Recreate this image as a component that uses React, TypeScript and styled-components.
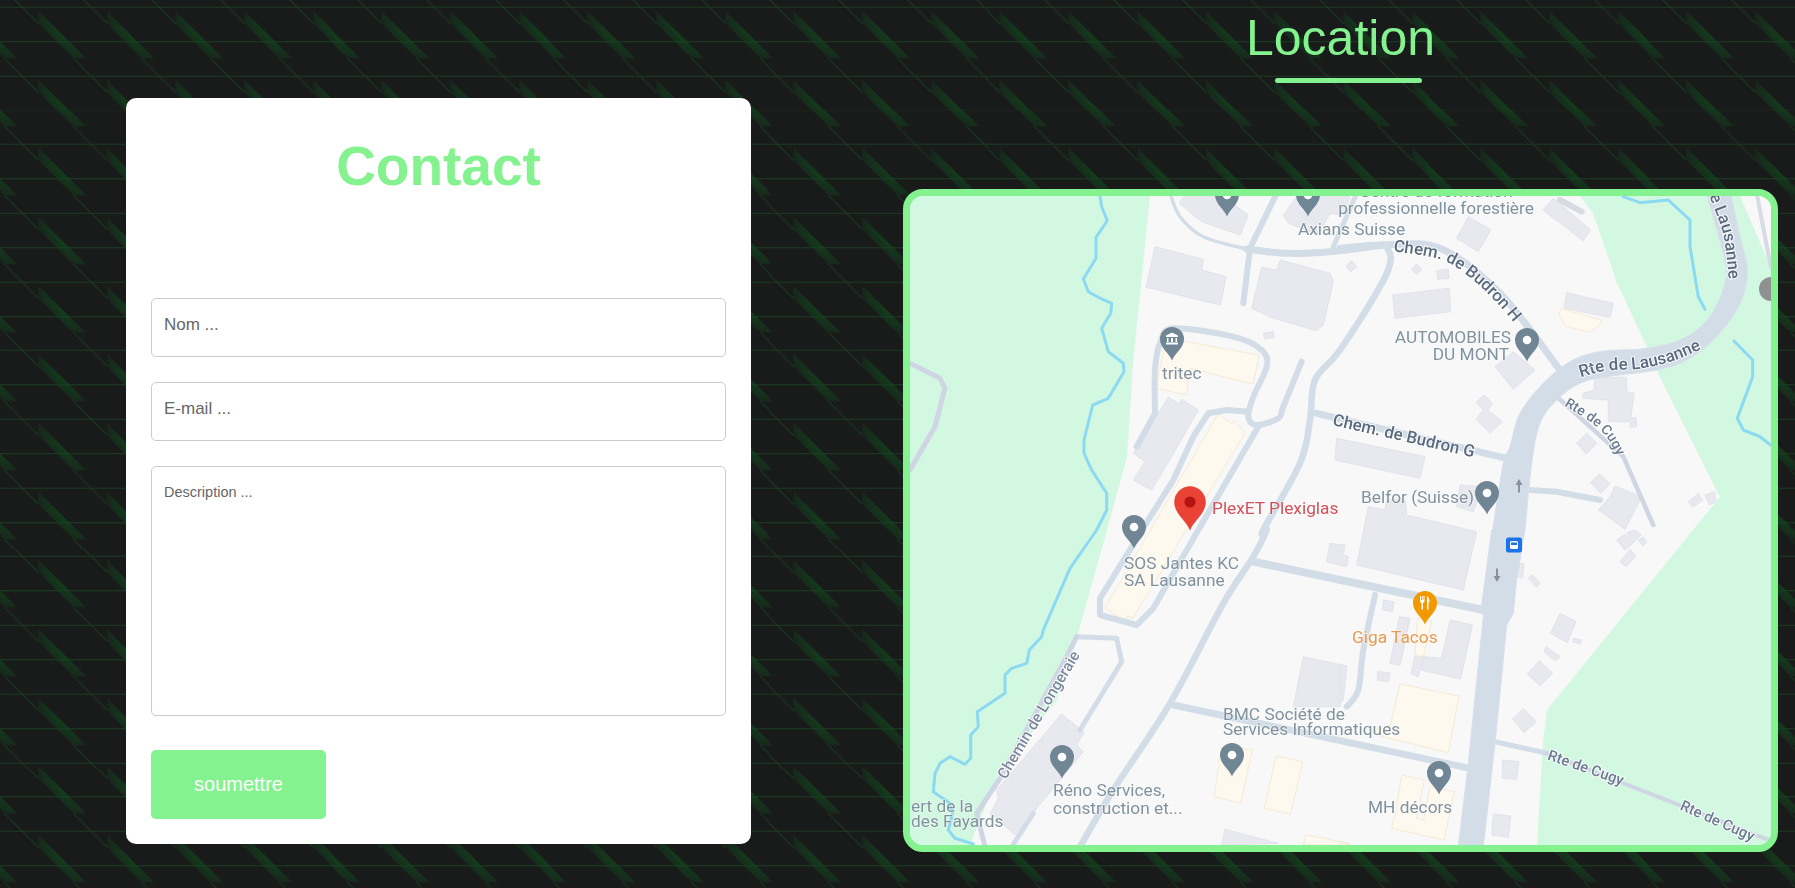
import React from "react";
import styled, { createGlobalStyle } from "styled-components";

const T = 68.7;
const tileShape = `<path d="M38.3 11 L86 58 L73 58 L38.3 23.3Z" fill="url(#g)"/><path d="M4.3 -10.7 L38.3 23.3" stroke="#163a1e" stroke-width="1" fill="none"/>`;
const copies = [-T, 0, T]
  .flatMap((dx) => [-T, 0, T].map((dy) => `<g transform="translate(${dx} ${dy})">${tileShape}</g>`))
  .join("");
const tile = `<svg xmlns="http://www.w3.org/2000/svg" width="${T}" height="${T}" viewBox="0 0 ${T} ${T}"><defs><radialGradient id="g" gradientUnits="userSpaceOnUse" cx="0" cy="0" r="1" gradientTransform="translate(63 36) rotate(45) scale(48 15)"><stop offset="0" stop-color="#133c1b"/><stop offset="0.55" stop-color="#162d1c"/><stop offset="1" stop-color="#191b1b"/></radialGradient></defs>${copies}<path d="M0 7.3H${T}" stroke="#183a1f" stroke-width="1"/><path d="M0 41.6H${T}" stroke="#193f21" stroke-width="1"/></svg>`;

const GlobalStyle = createGlobalStyle`
  html, body { margin: 0; padding: 0; }
  body {
    background-color: #191b1b;
    background-image: url("data:image/svg+xml,${encodeURIComponent(tile)}");
    background-size: ${T}px ${T}px;
    font-family: "Liberation Sans", Arial, sans-serif;
  }
`;

const accent = "#83f28f";

const Page = styled.main`
  display: flex;
  align-items: flex-start;
  height: 888px;
  overflow: hidden;
`;
const ContactCard = styled.section`
  box-sizing: border-box;
  width: 625px;
  margin: 98px 0 0 126px;
  padding: 25px;
  background: #fff;
  border-radius: 10px;
`;
const ContactTitle = styled.h2`
  margin: 12px 0 101px;
  font-size: 55px;
  line-height: 62px;
  font-weight: 700;
  text-align: center;
  color: ${accent};
`;
const Form = styled.form`
  display: flex;
  flex-direction: column;
  align-items: flex-start;
`;
const TextInput = styled.input`
  box-sizing: border-box;
  width: 100%;
  height: 59px;
  margin-bottom: 25px;
  padding: 0 12px 5px;
  border: 1px solid #ccc;
  border-radius: 5px;
  font: 17px "Liberation Sans", Arial, sans-serif;
  background: #fff;
  &::placeholder {
    color: #666;
  }
`;
const TextArea = styled.textarea`
  box-sizing: border-box;
  width: 100%;
  height: 250px;
  margin-bottom: 34px;
  padding: 17px 12px;
  border: 1px solid #ccc;
  border-radius: 5px;
  font: 14.5px "Liberation Sans", Arial, sans-serif;
  resize: none;
  background: #fff;
  &::placeholder {
    color: #666;
  }
`;
const SubmitButton = styled.button`
  width: 175px;
  height: 69px;
  border: 0;
  border-radius: 5px;
  background: ${accent};
  color: #fff;
  font: 20px "Liberation Sans", Arial, sans-serif;
`;
const LocationColumn = styled.section`
  width: 875px;
  margin-left: 152px;
`;
const LocationTitle = styled.h2`
  margin: 9px 0 0;
  font-size: 50px;
  line-height: 58px;
  font-weight: 400;
  text-align: center;
  color: ${accent};
`;
const TitleBar = styled.div`
  width: 147px;
  height: 5px;
  margin: 11px 0 0 372px;
  border-radius: 3px;
  background: ${accent};
`;
const MapFrame = styled.div`
  box-sizing: border-box;
  height: 663px;
  margin-top: 106px;
  border: 7px solid ${accent};
  border-radius: 20px;
  overflow: hidden;
  background: #f8f8f8;
`;
const MapSvg = styled.svg`
  display: block;
  width: 861px;
  height: 649px;
  filter: blur(0.45px);
`;
const PlaceLabel = styled.text<{ $color?: string; $size?: number }>`
  font-family: Roboto, sans-serif;
  font-size: ${(p) => p.$size ?? 17.3}px;
  fill: ${(p) => p.$color ?? "#7f929e"};
  paint-order: stroke;
  stroke: rgba(255, 255, 255, 0.55);
  stroke-width: 1.5px;
`;
const RoadLabel = styled.text<{ $color?: string; $size?: number }>`
  font-family: Roboto, sans-serif;
  font-size: ${(p) => p.$size ?? 16.8}px;
  font-weight: 500;
  fill: ${(p) => p.$color ?? "#5a6a7e"};
  paint-order: stroke;
  stroke: #fff;
  stroke-opacity: 0.85;
  stroke-width: 2px;
`;

type P = number[];
const z = (ox: number, oy: number, pts: P) => {
  const out: number[] = [];
  for (let i = 0; i < pts.length; i += 2) out.push(ox + pts[i] / 3, oy + pts[i + 1] / 3);
  return out;
};
const Z2 = (p: P) => z(900, 180, p);
const Z3 = (p: P) => z(1340, 180, p);
const Z4 = (p: P) => z(900, 530, p);
const Z5 = (p: P) => z(1340, 530, p);
const Z10 = (p: P) => z(1130, 400, p);
const Z12 = (p: P) => z(1130, 180, p);

const line = (p: P) => {
  let d = `M${p[0].toFixed(1)} ${p[1].toFixed(1)}`;
  for (let i = 2; i < p.length; i += 2) d += `L${p[i].toFixed(1)} ${p[i + 1].toFixed(1)}`;
  return d;
};
// Catmull-Rom spline through the points, continuing an already started path when `cont` is set.
const spline = (p: P, cont = false) => {
  let d = `${cont ? "L" : "M"}${p[0].toFixed(1)} ${p[1].toFixed(1)}`;
  const at = (i: number) => Math.max(0, Math.min(p.length - 2, i));
  for (let i = 0; i < p.length - 2; i += 2) {
    const a = at(i - 2), b = i, c = i + 2, e = at(i + 4);
    const c1x = p[b] + (p[c] - p[a]) / 6;
    const c1y = p[b + 1] + (p[c + 1] - p[a + 1]) / 6;
    const c2x = p[c] - (p[e] - p[b]) / 6;
    const c2y = p[c + 1] - (p[e + 1] - p[b + 1]) / 6;
    d += `C${c1x.toFixed(1)} ${c1y.toFixed(1)} ${c2x.toFixed(1)} ${c2y.toFixed(1)} ${p[c].toFixed(1)} ${p[c + 1].toFixed(1)}`;
  }
  return d;
};
const poly = (p: P) => line(p) + "Z";

const greens: P[] = [
  [1150, 196, 1133, 363, 1127, 457, 1107, 530, 1077, 637, 1057, 700, 997, 777, 970, 845, 910, 845, 910, 196],
  [1580, 196, 1740, 196, 1771, 268, 1771, 845, 1537, 845, 1543, 743, 1547, 710, 1693, 530, 1720, 497, 1660, 377, 1647, 347, 1617, 283, 1593, 213],
];

const rivers: P[] = [
  [
    ...Z2([600, 50, 605, 80, 622, 122, 588, 172, 588, 235, 550, 297, 565, 335, 605, 357, 635, 370, 632, 400, 605, 445, 625, 515, 670, 550, 672, 575, 625, 655, 578, 675, 552, 780, 552, 820, 575, 870, 620, 940, 620, 990, 590, 1050]),
    ...Z4([510, 115, 430, 300, 425, 320, 388, 360, 380, 400, 335, 415, 315, 435, 315, 490, 232, 545, 235, 590, 212, 615, 212, 685, 195, 703, 150, 680, 120, 700, 105, 730, 100, 785, 150, 820, 158, 850, 145, 900, 165, 925, 220, 942]),
  ],
  Z3([850, 50, 900, 68, 985, 60, 1050, 120, 1050, 200, 1075, 350, 1095, 388]),
  Z3([1182, 483, 1238, 540, 1238, 590, 1192, 715, 1210, 750, 1260, 770, 1292, 795]),
];

const buildings: P[] = [
  Z2([765, 200, 910, 238, 905, 270, 978, 290, 962, 375, 738, 322]),
  Z2([1055, 385, 1085, 262, 1130, 270, 1140, 240, 1290, 280, 1300, 305, 1270, 435, 1248, 452, 1105, 410, 1100, 405]),
  Z2([805, 652, 838, 672, 845, 658, 895, 690, 800, 855, 755, 930, 700, 900, 735, 845, 700, 820]),
  Z2([1090, 460, 1120, 455, 1122, 472, 1095, 478]),
  Z10([620, 115, 885, 170, 870, 235, 615, 180]),
  Z12([160, 50, 280, 50, 355, 105, 330, 165, 215, 125, 148, 70]),
  Z12([500, 50, 460, 105, 475, 130, 565, 165, 600, 100, 640, 105, 660, 50]),
  Z12([648, 258, 665, 243, 680, 260, 662, 275]),
  Z12([845, 268, 858, 254, 873, 268, 860, 283]),
  Z3([385, 110, 452, 150, 415, 215, 350, 175]),
  Z3([608, 90, 640, 55, 752, 150, 730, 182]),
  Z3([158, 345, 328, 325, 332, 395, 165, 415]),
  Z3([290, 272, 325, 268, 327, 295, 293, 298]),
  Z3([680, 338, 820, 370, 810, 412, 672, 385]),
  Z3([465, 560, 520, 515, 585, 570, 520, 628]),
  Z3([432, 645, 458, 670, 443, 690, 487, 725, 450, 760, 408, 718, 430, 690, 408, 668]),
  Z3([765, 593, 860, 592, 860, 635, 883, 640, 870, 725, 805, 725, 805, 660, 728, 655, 730, 640, 762, 630]),
  Z3([870, 715, 888, 712, 890, 740, 872, 742]),
  Z3([740, 760, 770, 790, 738, 822, 710, 790]),
  Z3([778, 882, 810, 910, 782, 940, 752, 908]),
  Z3([825, 918, 905, 950, 855, 1048, 775, 990, 810, 950]),
  Z3([1045, 965, 1075, 940, 1088, 960, 1058, 982]),
  Z3([1095, 945, 1125, 935, 1128, 965, 1108, 975]),
  Z3([360, 915, 430, 920, 400, 995, 350, 980]),
  Z10([715, 320, 765, 330, 770, 300, 825, 300, 830, 345, 1040, 395, 1000, 570, 680, 495]),
  Z10([600, 430, 645, 435, 640, 465, 655, 470, 650, 500, 590, 485]),
  Z5([130, 210, 162, 215, 158, 245, 128, 240]),
  Z5([178, 260, 210, 265, 180, 405, 150, 400]),
  Z5([330, 270, 397, 285, 362, 447, 245, 420, 250, 380, 305, 385]),
  Z5([225, 375, 250, 380, 235, 440, 213, 432]),
  Z5([113, 425, 150, 428, 146, 455, 112, 450]),
  Z4([1210, 380, 1340, 408, 1320, 530, 1180, 530]),
  Z5([660, 250, 708, 275, 682, 338, 632, 310]),
  Z5([700, 325, 725, 330, 720, 342, 698, 335]),
  Z5([618, 350, 660, 380, 645, 393, 612, 365]),
  Z5([598, 392, 638, 430, 600, 468, 562, 432]),
  Z5([550, 535, 588, 575, 552, 608, 518, 568]),
  Z5([830, 30, 855, 12, 878, 40, 855, 60]),
  Z5([860, 8, 885, 0, 903, 15, 880, 38]),
  Z5([895, 30, 910, 22, 920, 38, 908, 48]),
  Z5([870, 58, 888, 78, 858, 110, 840, 95]),
  Z5([565, 145, 578, 135, 600, 160, 590, 172]),
  Z5([535, 100, 552, 100, 548, 145, 530, 140]),
  Z5([488, 690, 537, 695, 530, 748, 487, 745]),
  Z5([460, 852, 512, 858, 505, 922, 455, 915]),
  Z5([0, 405, 20, 410, 10, 510, 0, 520]),
  Z4([485, 552, 552, 607, 530, 645, 550, 665, 345, 915, 270, 850, 295, 805, 290, 780]),
  Z4([975, 898, 1135, 940, 965, 945]),
  Z3([33, 243, 48, 258, 33, 275, 20, 258]),
  Z3([230, 253, 245, 267, 230, 283, 216, 267]),
];

const yellows: P[] = [
  Z2([800, 475, 1078, 525, 1060, 612, 870, 565, 860, 645, 768, 625, 785, 540]),
  [1218, 414, 1232, 424, 1234, 420, 1245, 433, 1133, 618, 1127, 616, 1125, 621, 1105, 608],
  Z3([662, 385, 785, 420, 780, 435, 745, 457, 675, 437, 658, 405]),
  Z5([232, 265, 275, 275, 250, 380, 225, 375]),
  Z5([180, 462, 357, 498, 325, 668, 100, 612, 100, 600, 150, 590]),
  Z5([185, 735, 253, 750, 230, 865, 250, 872, 270, 770, 343, 785, 312, 930, 155, 895, 160, 870, 165, 865]),
  Z4([965, 650, 1057, 660, 1022, 820, 942, 800]),
  Z4([1128, 678, 1208, 695, 1172, 852, 1093, 835]),
  Z4([1218, 915, 1350, 940, 1345, 945, 1210, 945]),
  Z5([0, 935, 30, 945, 0, 945]),
];

const mainRoadPath =
  spline(Z3([1100, 40, 1125, 130, 1152, 230, 1158, 300, 1110, 410, 1030, 475, 920, 505, 780, 515, 690, 545, 610, 610, 540, 700, 510, 800, 490, 850, 458, 1050])) +
  spline(Z5([455, 0, 425, 225]), true) +
  line(Z5([425, 225, 430, 260, 385, 700, 355, 950, 430, 950, 465, 640, 500, 285, 520, 250, 530, 150])).replace("M", "L") +
  spline(Z3([555, 1050, 575, 850, 600, 730, 650, 660, 720, 610, 800, 590, 950, 570, 1040, 540, 1130, 470, 1200, 370, 1222, 270, 1200, 170, 1172, 40]), true) +
  "Z";

type Road = { p: P; w: number; c?: string; curve?: boolean };
const blue = "#d3dde7";
const lilac = "#cfd5e2";
const roads: Road[] = [
  { p: Z12([120, 40, 150, 110, 220, 170, 350, 207]), w: 3.5, curve: true },
  { p: Z12([350, 207, 470, 220, 600, 215, 760, 195]), w: 7, curve: true },
  { p: Z3([0, 205, 130, 195, 300, 205, 480, 340, 660, 570]), w: 7, curve: true },
  { p: Z12([440, 40, 360, 205, 340, 370]), w: 6 },
  { p: Z12([680, 40, 610, 200]), w: 5 },
  { p: [...Z3([140, 200, 152, 240, 120, 320, 0, 510]), ...Z2([1245, 600, 1230, 720, 1200, 850, 1090, 1050]), ...Z4([1100, 0, 1060, 80, 970, 220, 810, 520, 640, 780, 540, 950])], w: 6.5, curve: true },
  { p: [...Z2([1250, 700]), ...Z3([500, 835])], w: 7 },
  { p: Z2([765, 700, 765, 570, 780, 490, 820, 445, 1000, 470, 1085, 510, 1100, 560, 1060, 650, 1045, 710, 1070, 735, 1135, 715, 1150, 680, 1205, 545]), w: 6, curve: true },
  { p: Z2([765, 700, 710, 800]), w: 6 },
  { p: [...Z2([1045, 695, 980, 690, 925, 700, 880, 770, 820, 900, 745, 1020]), ...Z4([600, 205, 600, 255, 710, 285, 760, 235, 895, 0]), ...Z2([1075, 740])], w: 6 },
  { p: Z10([370, 485, 1060, 630]), w: 8 },
  { p: Z5([105, 195, 70, 360, 55, 480, 20, 530]), w: 6, curve: true },
  { p: [...Z4([820, 525]), ...Z5([390, 715])], w: 7 },
  { p: Z5([465, 635, 620, 670]), w: 5 },
  { p: Z5([620, 670, 1300, 935]), w: 4, c: lilac },
  { p: Z3([650, 650, 850, 830, 940, 1035]), w: 4.5, c: lilac },
  { p: Z3([570, 930, 650, 935, 780, 960]), w: 6 },
  { p: Z3([660, 60, 725, 95]), w: 6, c: "#d7dbe4" },
  { p: Z4([530, 320, 650, 325, 665, 395, 540, 600]), w: 5 },
  { p: Z4([530, 320, 500, 380, 300, 745, 230, 850, 255, 950]), w: 5, c: lilac },
  { p: Z4([400, 850, 335, 950]), w: 5 },
  { p: Z2([30, 550, 120, 595, 135, 625, 105, 740, 30, 870]), w: 5, c: lilac },
  { p: Z3([1250, 40, 1292, 260]), w: 4, c: "#d7dbe4" },
];

const greyPin = "#708694";
const pinPath = (r: number, h: number) =>
  `M0 ${h}C${-r * 0.2} ${h * 0.68} ${-r} ${h * 0.42} ${-r} 0A${r} ${r} 0 1 1 ${r} 0C${r} ${h * 0.42} ${r * 0.2} ${h * 0.68} 0 ${h}Z`;

const Pin: React.FC<{ x: number; y: number; fill?: string; children?: React.ReactNode }> = ({ x, y, fill = greyPin, children }) => (
  <g transform={`translate(${x} ${y})`}>
    <path d={pinPath(12, 21.5)} fill={fill} />
    {children ?? <circle r="4.3" fill="#fff" />}
  </g>
);

const baselines = {
  budronH: spline(Z3([160, 214, 300, 238, 385, 288, 470, 368, 540, 450])),
  budronG: line([1332, 425, 1490, 461]),
  lausanne: spline(Z3([722, 592, 800, 572, 900, 566, 1000, 542, 1100, 500])),
  lausanneTop: spline(Z3([1108, 48, 1150, 165, 1168, 310])),
  cugyUp: spline(Z3([672, 677, 750, 725, 800, 772, 838, 840])),
  longeraie: line(Z4([317, 750, 548, 362])),
  cugyA: line(Z5([620, 688, 870, 775])),
  cugyB: line(Z5([1018, 838, 1260, 945])),
};

const OnPath: React.FC<{ id: string; children: string; color?: string; size?: number }> = ({ id, children, color, size }) => (
  <RoadLabel $color={color} $size={size}>
    <textPath href={`#${id}`}>{children}</textPath>
  </RoadLabel>
);

const GoogleMap = () => (
  <MapSvg viewBox="910 196 861 649" xmlns="http://www.w3.org/2000/svg" aria-label="Carte">
    <defs>
      {Object.entries(baselines).map(([k, d]) => (
        <path key={k} id={k} d={d} />
      ))}
    </defs>
    <rect x="910" y="196" width="861" height="649" fill="#f8f8f8" />
    {greens.map((p, i) => (
      <path key={i} d={poly(p)} fill="#d2f8e1" />
    ))}
    {rivers.map((p, i) => (
      <path key={i} d={line(p)} fill="none" stroke="#8cd9f2" strokeWidth="3" strokeLinejoin="round" strokeLinecap="round" />
    ))}
    {buildings.map((p, i) => (
      <path key={i} d={poly(p)} fill="#e8e9ee" stroke="#e1e3ed" strokeWidth="1" />
    ))}
    {yellows.map((p, i) => (
      <path key={i} d={poly(p)} fill="#fef9ee" stroke="#f6ead6" strokeWidth="1" />
    ))}
    {roads.map((r, i) => (
      <path key={i} d={r.curve ? spline(r.p) : line(r.p)} fill="none" stroke={r.c ?? blue} strokeWidth={r.w} strokeLinejoin="round" strokeLinecap="round" />
    ))}
    <path d={mainRoadPath} fill={blue} stroke="#d9e0ea" strokeWidth="1" />

    <path d="M1519 479l-3.500 6h2.500v7.500h2v-7.500h2.500z" fill="#8b9199" />
    <path d="M1497 582l-3.500-6h2.500v-7.500h2v7.500h2.500z" fill="#8b9199" />
    <rect x="1506" y="537.500" width="16" height="15" rx="2.500" fill="#1a73e8" />
    <rect x="1510" y="541" width="8" height="8" rx="1.500" fill="#fff" />
    <rect x="1511" y="542.500" width="6" height="2.500" fill="#1a73e8" />

    <PlaceLabel x="1436" y="197" textAnchor="middle">Centre de formation</PlaceLabel>
    <PlaceLabel x="1436" y="214" textAnchor="middle">professionnelle forestière</PlaceLabel>
    <PlaceLabel x="1298" y="235">Axians Suisse</PlaceLabel>
    <PlaceLabel x="1162" y="379">tritec</PlaceLabel>
    <PlaceLabel x="1511" y="343" textAnchor="end">AUTOMOBILES</PlaceLabel>
    <PlaceLabel x="1509" y="360" textAnchor="end">DU MONT</PlaceLabel>
    <PlaceLabel x="1361" y="503">Belfor (Suisse)</PlaceLabel>
    <PlaceLabel x="1212" y="514" $color="#d2505a">PlexET Plexiglas</PlaceLabel>
    <PlaceLabel x="1124" y="569">SOS Jantes KC</PlaceLabel>
    <PlaceLabel x="1124" y="586">SA Lausanne</PlaceLabel>
    <PlaceLabel x="1352" y="643" $color="#e89a4f">Giga Tacos</PlaceLabel>
    <PlaceLabel x="1223" y="720">BMC Société de</PlaceLabel>
    <PlaceLabel x="1223" y="735">Services Informatiques</PlaceLabel>
    <PlaceLabel x="1053" y="796">Réno Services,</PlaceLabel>
    <PlaceLabel x="1053" y="814">construction et...</PlaceLabel>
    <PlaceLabel x="911" y="812">ert de la</PlaceLabel>
    <PlaceLabel x="911" y="827">des Fayards</PlaceLabel>
    <PlaceLabel x="1368" y="813">MH décors</PlaceLabel>

    <OnPath id="budronH">Chem. de Budron H</OnPath>
    <OnPath id="budronG">Chem. de Budron G</OnPath>
    <OnPath id="lausanne">Rte de Lausanne</OnPath>
    <OnPath id="lausanneTop">e Lausanne</OnPath>
    <OnPath id="cugyUp" color="#6b7a90" size={14}>Rte de Cugy</OnPath>
    <OnPath id="longeraie" color="#7d879c" size={15.4}>Chemin de Longeraie</OnPath>
    <OnPath id="cugyA" color="#6b7a90" size={14.8}>Rte de Cugy</OnPath>
    <OnPath id="cugyB" color="#6b7a90" size={14.8}>Rte de Cugy</OnPath>

    <Pin x={1227} y={195} />
    <Pin x={1308} y={195} />
    <Pin x={1527} y={340} />
    <Pin x={1487} y={493} />
    <Pin x={1134} y={527} />
    <Pin x={1062} y={757} />
    <Pin x={1232} y={755} />
    <Pin x={1439} y={773} />
    <Pin x={1172} y={339}>
      <path d="M-6 -3.500L0 -6.500L6 -3.500V-2H-6Z M-5 -1H-3.500V3H-5Z M-1 -1H1V3H-1Z M3.500 -1H5V3H3.500Z M-6 3.500H6V5.500H-6Z" fill="#fff" />
    </Pin>
    <Pin x={1425} y={603} fill="#f29900">
      <path d="M-5 -7V-2.500C-5 -1 -4.500 -0.500 -3.500 0V6.500H-2V0C-1 -0.500 -0.500 -1 -0.500 -2.500V-7H-1.500V-3H-2.300V-7H-3.200V-3H-4V-7Z M2 -7C4 -6 4.500 -3 4.500 -0.500H3.500V6.500H2Z" fill="#fff" />
    </Pin>
    <circle cx="1771" cy="289" r="12" fill="#8f9092" />

    <g transform="translate(1190 502)">
      <path d={pinPath(15.5, 28)} fill="#ea4335" stroke="#d93b2c" strokeWidth="0.5" />
      <circle r="5.600" fill="#b31412" />
    </g>
  </MapSvg>
);

export default function App() {
  return (
    <Page>
      <GlobalStyle />
      <ContactCard>
        <ContactTitle>Contact</ContactTitle>
        <Form onSubmit={(e) => e.preventDefault()}>
          <TextInput type="text" placeholder="Nom ..." />
          <TextInput type="email" placeholder="E-mail ..." />
          <TextArea placeholder="Description ..." />
          <SubmitButton type="submit">soumettre</SubmitButton>
        </Form>
      </ContactCard>
      <LocationColumn>
        <LocationTitle>Location</LocationTitle>
        <TitleBar />
        <MapFrame>
          <GoogleMap />
        </MapFrame>
      </LocationColumn>
    </Page>
  );
}
